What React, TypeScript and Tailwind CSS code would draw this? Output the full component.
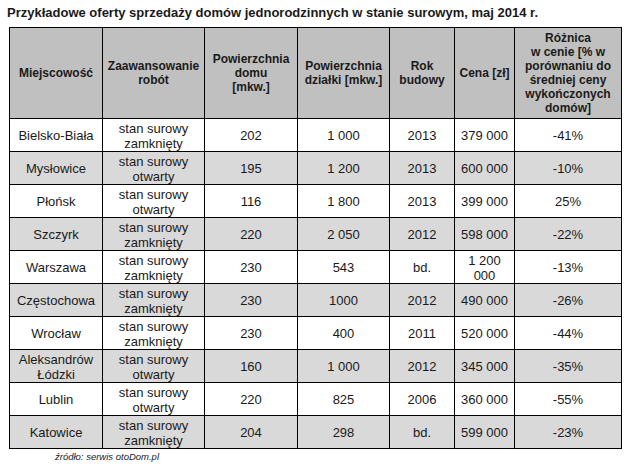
const HEAD: string[][] = [
  ['Miejscowość'],
  ['Zaawansowanie', 'robót'],
  ['Powierzchnia', 'domu', '[mkw.]'],
  ['Powierzchnia', 'działki [mkw.]'],
  ['Rok', 'budowy'],
  ['Cena [zł]'],
  ['Różnica', 'w cenie [% w', 'porównaniu do', 'średniej ceny', 'wykończonych', 'domów]'],
]

const COLS = ['w-[93px]', 'w-[102px]', 'w-[93px]', 'w-[92px]', 'w-[65px]', 'w-[60px]', 'w-[107px]']

const ZAMK = ['stan surowy', 'zamknięty']
const OTW = ['stan surowy', 'otwarty']

const ROWS: (string | string[])[][] = [
  ['Bielsko-Biała', ZAMK, '202', '1 000', '2013', '379 000', '-41%'],
  ['Mysłowice', OTW, '195', '1 200', '2013', '600 000', '-10%'],
  ['Płońsk', OTW, '116', '1 800', '2013', '399 000', '25%'],
  ['Szczyrk', ZAMK, '220', '2 050', '2012', '598 000', '-22%'],
  ['Warszawa', ZAMK, '230', '543', 'bd.', ['1 200', '000'], '-13%'],
  ['Częstochowa', ZAMK, '230', '1000', '2012', '490 000', '-26%'],
  ['Wrocław', ZAMK, '230', '400', '2011', '520 000', '-44%'],
  [['Aleksandrów', 'Łódzki'], OTW, '160', '1 000', '2012', '345 000', '-35%'],
  ['Lublin', OTW, '220', '825', '2006', '360 000', '-55%'],
  ['Katowice', ZAMK, '204', '298', 'bd.', '599 000', '-23%'],
]

function Lines({ value }: { value: string | string[] }) {
  const lines = Array.isArray(value) ? value : [value]
  return (
    <>
      {lines.map((l, i) => (
        <div key={i}>{l}</div>
      ))}
    </>
  )
}

export default function App() {
  return (
    <div className="min-h-[467px] w-[631px] bg-white font-['Liberation_Sans',Arial,sans-serif] text-[#1a1a1a]">
      <div className="pl-[7px] pt-[5px] text-[13px] font-bold leading-[15px] whitespace-nowrap">
        Przykładowe oferty sprzedaży domów jednorodzinnych w stanie surowym, maj 2014 r.
      </div>

      <table className="ml-[9px] mt-[7px] table-fixed border-collapse border border-black">
        <colgroup>
          {COLS.map((c, i) => (
            <col key={i} className={c} />
          ))}
        </colgroup>
        <thead>
          <tr className="h-[91px] bg-[#c0c0c0]">
            {HEAD.map((h, i) => (
              <th
                key={i}
                className="border border-black px-0 text-center align-middle text-[12px] font-bold leading-[14px] whitespace-nowrap"
              >
                <Lines value={h} />
              </th>
            ))}
          </tr>
        </thead>
        <tbody>
          {ROWS.map((row, r) => (
            <tr key={r} className={`h-[33px] ${r % 2 === 1 ? 'bg-[#d9d9d9]' : 'bg-white'}`}>
              {row.map((cell, i) => (
                <td
                  key={i}
                  className="border border-black p-0 pt-[1px] text-center align-middle text-[13px] leading-[15px] whitespace-nowrap"
                >
                  <Lines value={cell} />
                </td>
              ))}
            </tr>
          ))}
        </tbody>
      </table>

      <div className="pl-[55px] pt-[2px] text-[9.5px] italic leading-[11px]">źródło: serwis otoDom.pl</div>
    </div>
  )
}
